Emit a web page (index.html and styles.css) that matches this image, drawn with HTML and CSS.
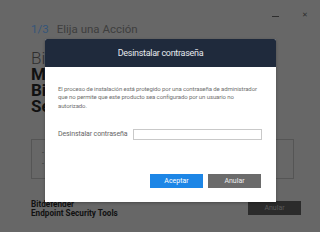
FILE: index.html
```html
<!DOCTYPE html>
<html>
<head>
<meta charset="utf-8">
<link rel="stylesheet" href="styles.css">
</head>
<body>
<div class="window">
  <div class="titlebar">
    <span class="min"></span>
    <span class="close">&#x2715;</span>
  </div>
  <div class="content">
    <div class="step"><span class="num">1/3</span><span class="label">Elija una Acción</span></div>
    <div class="hero">
      <div class="light">Bienvenido</div>
      <div class="bold">Modificar</div>
      <div class="bold">Bitdefender</div>
      <div class="bold">Security</div>
    </div>
    <div class="box">
      <div class="opt">- Modificar</div>
      <div class="opt">- Reparar</div>
    </div>
  </div>
  <div class="footer">
    <div class="brand">Bitdefender<br>Endpoint Security Tools</div>
    <button class="cancel-bg">Anular</button>
  </div>
</div>
<div class="modal">
  <div class="modal-head">Desinstalar contraseña</div>
  <div class="modal-body">
    <p class="desc">El proceso de instalación está protegido por una contraseña de administrador que no permite que este producto sea configurado por un usuario no autorizado.</p>
    <div class="field">
      <label class="field-label">Desinstalar contraseña</label>
      <input class="field-input" type="password">
    </div>
    <div class="actions">
      <button class="btn btn-ok">Aceptar</button>
      <button class="btn btn-cancel">Anular</button>
    </div>
  </div>
</div>
</body>
</html>
```
FILE: styles.css
```css
* { box-sizing: border-box; }
html, body { margin: 0; padding: 0; }
body {
  width: 320px;
  height: 232px;
  background: #676767;
  font-family: Roboto, "Liberation Sans", sans-serif;
  overflow: hidden;
  position: relative;
}
.window {
  width: 320px;
  height: 232px;
  display: flex;
  flex-direction: column;
}
.titlebar {
  height: 22px;
  display: flex;
  justify-content: flex-end;
  align-items: center;
  padding: 0 12px 0 0;
  gap: 23px;
}
.min {
  width: 7px;
  height: 1px;
  background: #2e2e2e;
  margin-top: 10px;
}
.close {
  font-size: 7px;
  color: #2e2e2e;
  margin-top: 7px;
}
.content {
  padding-left: 31px;
  padding-right: 26px;
}
.step {
  height: 14px;
  line-height: 14px;
  font-size: 11.5px;
  display: flex;
  gap: 8px;
}
.num { color: #34557a; }
.label { color: #3e3e3e; }
.hero {
  margin-top: 14px;
  font-size: 17px;
  line-height: 16px;
  color: #111;
}
.hero .light { font-weight: 300; color: #2f2f2f; }
.hero .bold { font-weight: 700; }
.box {
  margin-top: 25px;
  height: 40px;
  border: 1px solid #555;
  padding: 8px 10px;
  font-size: 7px;
  line-height: 11px;
  color: #333;
}
.footer {
  margin-top: auto;
  margin-bottom: 14px;
  display: flex;
  justify-content: space-between;
  align-items: flex-start;
  padding: 0 19px 0 31px;
}
.brand {
  font-size: 8.2px;
  line-height: 9px;
  font-weight: 700;
  color: #111;
}
.cancel-bg {
  width: 53px;
  height: 14px;
  border: 0;
  background: #2b2b2b;
  color: #5a5a5a;
  font-family: inherit;
  font-size: 7px;
  padding: 0;
  margin-top: 1px;
}
.modal {
  position: absolute;
  left: 45px;
  top: 39px;
  width: 231px;
  height: 163px;
  background: #fff;
  border-radius: 2px 2px 0 0;
  overflow: hidden;
  box-shadow: 0 1px 3px rgba(0,0,0,0.3);
}
.modal-head {
  height: 28px;
  background: #1f2a3c;
  color: #e6e9ee;
  font-size: 9px;
  letter-spacing: -0.3px;
  line-height: 28px;
  text-align: center;
}
.modal-body {
  padding: 18px 12px 0 13px;
}
.desc {
  margin: 0;
  max-width: 202px;
  font-size: 6px;
  letter-spacing: -0.1px;
  line-height: 8.3px;
  color: #707070;
}
.field {
  margin-top: 19px;
  margin-right: 2px;
  display: flex;
  align-items: center;
  gap: 6px;
}
.field-label {
  font-size: 7px;
  letter-spacing: -0.1px;
  color: #666;
  white-space: nowrap;
}
.field-input {
  flex: 1;
  min-width: 0;
  height: 11px;
  border: 1px solid #c9c9c9;
  padding: 0;
  margin: 0;
}
.actions {
  margin-top: 34px;
  display: flex;
  justify-content: flex-end;
  gap: 5px;
  padding-right: 3px;
}
.btn {
  width: 53px;
  height: 14px;
  border: 0;
  padding: 0;
  font-family: inherit;
  font-size: 7px;
  color: #fff;
}
.btn-ok { background: #1d86e6; }
.btn-cancel { background: #6b6b6b; color: #eee; }
```
